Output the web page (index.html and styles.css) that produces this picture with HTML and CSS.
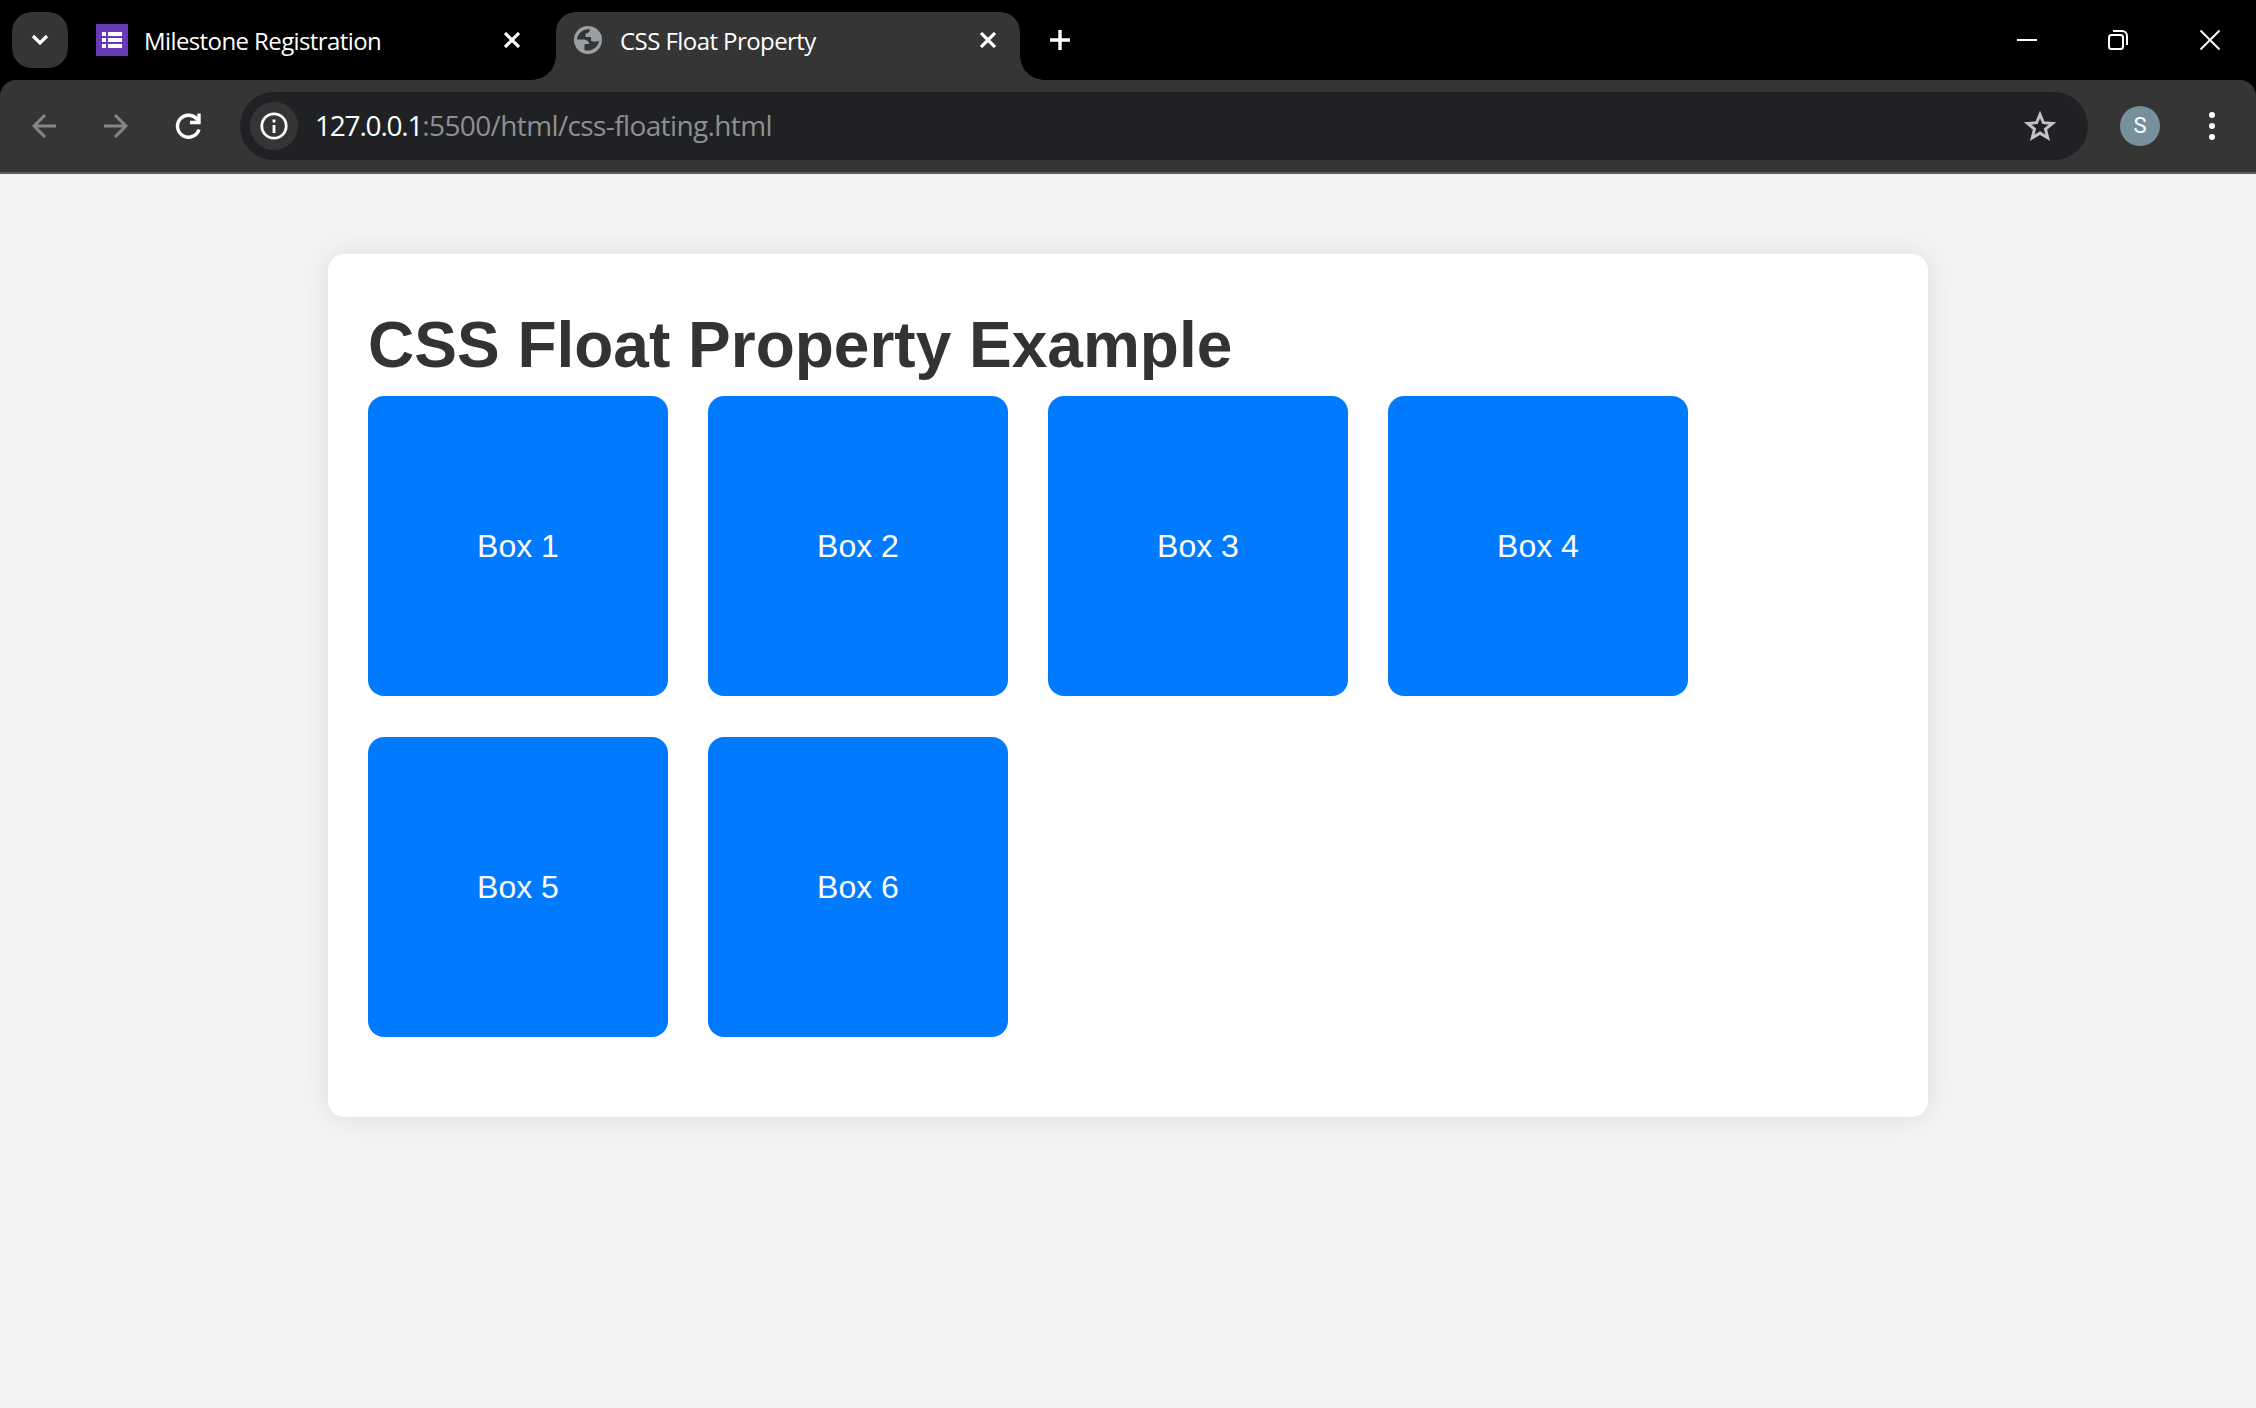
FILE: index.html
```html
<!DOCTYPE html>
<html lang="en">
<head>
<meta charset="utf-8">
<title>CSS Float Property</title>
<link rel="stylesheet" href="styles.css">
</head>
<body>
<div class="browser">
  <header class="tab-strip">
    <button class="tab-search" aria-label="Search tabs"><svg width="18" height="12" viewBox="0 0 18 12"><path d="M2 2l7 7 7-7" fill="none" stroke="#fff" stroke-width="3.2"/></svg></button>
    <div class="tab">
      <svg class="favicon" width="32" height="32" viewBox="0 0 32 32"><rect width="32" height="32" rx="1" fill="#673ab7"/><path d="M6 8h4v4H6zM12 8h14v4H12zM6 14h4v4H6zM12 14h14v4H12zM6 20h4v4H6zM12 20h14v4H12z" fill="#fff"/></svg>
      <span class="tab-title title-first">Milestone Registration</span>
      <svg class="close" width="16" height="16" viewBox="0 0 16 16"><path d="M1 1l14 14M15 1L1 15"/></svg>
    </div>
    <div class="tab active">
      <svg class="favicon globe" width="32" height="32" viewBox="0 0 32 32"><circle cx="16" cy="16" r="14" fill="#9aa0a6"/><path d="M18 5.300C11 4.600 5.500 9.500 5 15.500H11C14.500 15.500 17 17 17 20H12.500V26.300C20 28 26.800 22.500 27 16.500C25 18 20 18 19 16.500V13H13.500V9.500C16 9.500 18 8 18 5.300Z" fill="#353535"/></svg>
      <span class="tab-title title-second">CSS Float Property</span>
      <svg class="close" width="16" height="16" viewBox="0 0 16 16"><path d="M1 1l14 14M15 1L1 15"/></svg>
    </div>
    <svg class="new-tab" width="20" height="20" viewBox="0 0 20 20"><path d="M10 0v20M0 10h20" stroke="#fff" stroke-width="3.400"/></svg>
    <div class="window-controls">
      <svg class="minimize" width="20" height="20" viewBox="0 0 20 20"><path d="M0 10h20"/></svg>
      <svg width="20" height="20" viewBox="0 0 20 20"><rect x="1" y="5" width="14" height="14" rx="2.500"/><path d="M5 1h9a5 5 0 0 1 5 5v9"/></svg>
      <svg width="20" height="20" viewBox="0 0 20 20"><path d="M.5.5l19 19M19.500.5l-19 19"/></svg>
    </div>
  </header>
  <nav class="toolbar">
    <svg class="nav dim" width="24" height="24" viewBox="0 0 24 24"><path d="M24 12H2M13 1L2 12l11 11"/></svg>
    <svg class="nav dim" width="24" height="24" viewBox="0 0 24 24"><path d="M0 12h22M11 1l11 11-11 11"/></svg>
    <svg class="nav reload" width="28" height="28" viewBox="0 0 28 28"><path d="M23.600 8A11 11 0 1 0 25 17.500M25 1.500V10.500H16"/></svg>
    <div class="address">
      <span class="info"><svg width="28" height="28" viewBox="0 0 28 28"><circle cx="14" cy="14" r="12.200" fill="none" stroke="#fff" stroke-width="2.800"/><path d="M14 13v8M14 7.500v3" stroke="#fff" stroke-width="2.800"/></svg></span>
      <span class="url"><span class="host">127.0.0.1</span><span class="path">:5500/html/css-floating.html</span></span>
      <svg class="star" width="34" height="32" viewBox="0 0 34 32"><path d="M17 4.500l3.400 8.200 9 .7-6.900 5.700 2.200 8.700-7.700-4.700-7.700 4.700 2.200-8.700-6.900-5.700 9-.7z" fill="none" stroke="#c2c2c2" stroke-width="3"/></svg>
    </div>
    <span class="avatar">S</span>
    <svg class="menu" width="8" height="28" viewBox="0 0 8 28"><circle cx="4" cy="3" r="3"/><circle cx="4" cy="14" r="3"/><circle cx="4" cy="25" r="3"/></svg>
  </nav>
  <main class="page">
    <section class="container">
      <h1 class="heading">CSS Float Property Example</h1>
      <div class="boxes">
        <div class="box">Box 1</div>
        <div class="box">Box 2</div>
        <div class="box">Box 3</div>
        <div class="box">Box 4</div>
        <div class="box">Box 5</div>
        <div class="box">Box 6</div>
      </div>
    </section>
  </main>
</div>
</body>
</html>
```
FILE: styles.css
```css
* { box-sizing: border-box; }
body { margin: 0; background: #f4f4f4; font-family: "Liberation Sans", Arial, sans-serif; }
svg { display: block; flex: none; }
.browser { height: 1408px; overflow: hidden; background: #000; display: flex; flex-direction: column; }
.tab-strip { height: 80px; flex: none; display: flex; padding: 12px 0 0 12px; background: #000; }
.tab-search { width: 56px; height: 56px; padding: 0; border: 0; border-radius: 20px; background: #353535; display: flex; align-items: center; justify-content: center; }
.tab { width: 476px; height: 68px; display: flex; align-items: flex-start; padding: 12px 0 0 16px; margin-left: 12px; }
.tab:not(.active) .close { margin-left: auto; margin-right: 36px; }
.tab-title { font-family: "Open Sans", "Noto Sans", sans-serif; font-size: 24px; line-height: 32px; margin: 1px 0 0 16px; white-space: nowrap; color: #fff; }
.title-first { letter-spacing: -.6px; }
.title-second { letter-spacing: -.56px; }
.close { margin-top: 8px; fill: none; stroke: #fff; stroke-width: 3.2; }
.active { position: relative; width: 464px; margin-left: 0; border-radius: 20px 20px 0 0; background: #353535; }
.active::before, .active::after { content: ""; position: absolute; bottom: 0; width: 24px; height: 24px; }
.active::before { left: -24px; background: radial-gradient(circle at 0 0, transparent 23.5px, #353535 24px); }
.active::after { right: -24px; background: radial-gradient(circle at 100% 0, transparent 23.5px, #353535 24px); }
.active .close { margin-left: auto; margin-right: 24px; }
.new-tab { margin: 18px 0 0 30px; }
.window-controls { display: flex; gap: 72px; margin: 18px 36px 0 auto; }
.window-controls svg { fill: none; stroke: #fff; stroke-width: 2; }
.window-controls .minimize { margin-right: -1px; }
.toolbar { height: 94px; flex: none; display: flex; align-items: center; padding: 0 40px 0 32px; background: #353535; border-radius: 16px 16px 0 0; border-bottom: 2px solid #5c5c5c; }
.nav { fill: none; stroke: #fff; stroke-width: 3.4; }
.dim { stroke: #868686; stroke-width: 3; margin-right: 48px; }
.reload { margin-left: -2px; }
.address { width: 1848px; height: 68px; margin-left: 38px; border-radius: 34px; background: #202124; display: flex; align-items: center; padding: 0 31px 0 10px; }
.info { width: 48px; height: 48px; border-radius: 50%; background: #353535; display: flex; align-items: center; justify-content: center; }
.url { font-family: "Open Sans", "Noto Sans", sans-serif; font-size: 28px; line-height: 36px; margin: 0 0 2px 17px; white-space: nowrap; }
.host { color: #fff; letter-spacing: -1.2px; }
.path { color: #8f8f8f; letter-spacing: -.62px; }
.star { margin-left: auto; }
.avatar { width: 40px; height: 40px; margin-left: 32px; border-radius: 50%; background: #78909c; color: #fff; font: 22px/40px Roboto, sans-serif; text-align: center; }
.menu { margin-left: auto; fill: #fff; }
.page { flex: 1; padding-top: 80px; background: #f4f4f4; }
.container { width: 1600px; height: 863px; margin: 0 auto; padding: 40px; border-radius: 16px; background: #fff; box-shadow: 0 0 30px rgba(0, 0, 0, .1); }
.heading { margin: 0; font-size: 64px; line-height: 102px; color: #333; }
.boxes { display: grid; grid-template-columns: repeat(4, 300px); gap: 41px 40px; }
.box { height: 300px; border-radius: 16px; background: #007bff; color: #fff; font-size: 32px; line-height: 300px; text-align: center; }
```
